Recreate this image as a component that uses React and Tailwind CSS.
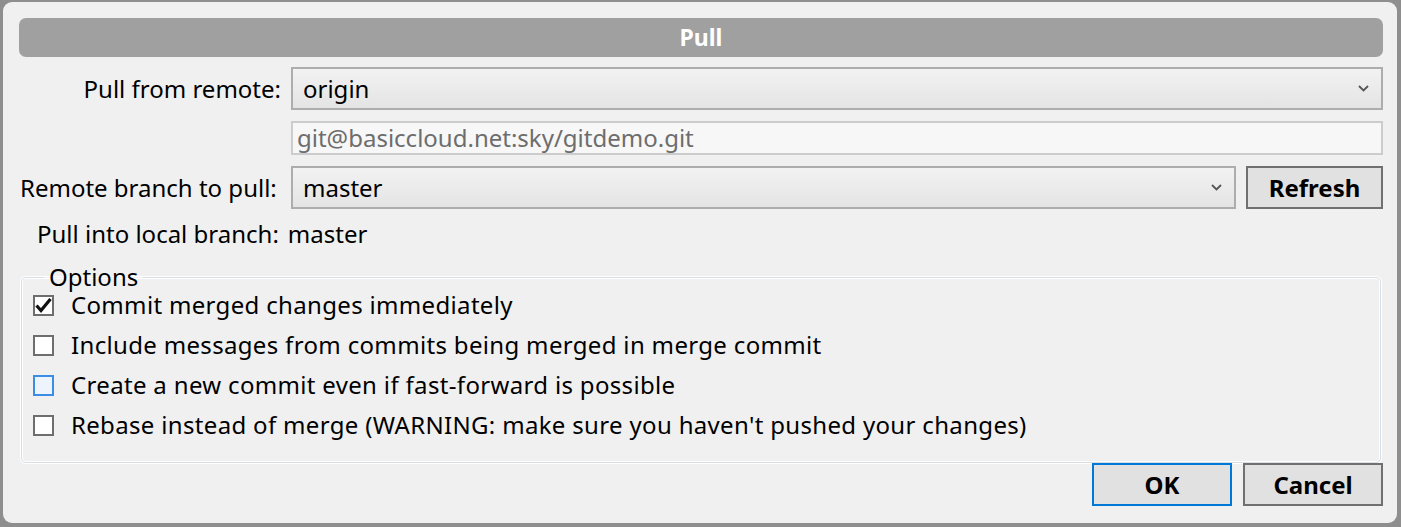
import React from 'react';

const font = { fontFamily: '"Noto Sans", "Open Sans", sans-serif' };

const Chevron = () => (
  <svg width="11" height="7" viewBox="0 0 11 7" className="shrink-0">
    <polyline points="1,1 5.5,5.5 10,1" fill="none" stroke="#555" strokeWidth="1.8" />
  </svg>
);

const Select = ({ value, className }) => (
  <div
    className={`flex items-center justify-between border-2 border-[#adadad] bg-gradient-to-b from-[#f2f2f2] to-[#e4e4e4] pl-[10px] pr-[12px] text-[#000] ${className}`}
  >
    <span>{value}</span>
    <Chevron />
  </div>
);

const Check = ({ checked, hover }) => (
  <div
    className={`flex h-[21px] w-[21px] shrink-0 items-center justify-center border-2 ${
      hover ? 'border-[#3b8de8] bg-[#eef4fc]' : 'border-[#6e6e6e] bg-white'
    }`}
  >
    {checked && (
      <svg width="17" height="15" viewBox="0 0 17 15">
        <polyline points="1.5,7.5 6,12.5 15.5,1" fill="none" stroke="#111" strokeWidth="3.2" />
      </svg>
    )}
  </div>
);

const options = [
  { label: 'Commit merged changes immediately', checked: true },
  { label: 'Include messages from commits being merged in merge commit' },
  { label: 'Create a new commit even if fast-forward is possible', hover: true },
  { label: "Rebase instead of merge (WARNING: make sure you haven't pushed your changes)" },
];

export default function App() {
  return (
    <div className="h-[527px] w-[1401px] bg-[#8e8e8e] pb-[4px] pl-[3px] pr-[4px] pt-[2px]" style={font}>
      <div className="flex h-full flex-col rounded-[9px] bg-[#f0f0f0] pl-[16px] pr-[14px] pt-[16px] text-[24px] leading-none text-black">
        {/* Title */}
        <div className="flex h-[39px] items-center justify-center rounded-[7px] bg-[#a0a0a0] text-[23px] font-bold text-white">
          Pull
        </div>

        {/* Pull from remote */}
        <div className="mt-[10px] flex items-center gap-[10px]">
          <div className="w-[262px] text-right">Pull from remote:</div>
          <Select value="origin" className="h-[43px] flex-1" />
        </div>

        {/* Remote URL */}
        <div className="mt-[11px] flex">
          <div className="ml-[272px] flex h-[34px] flex-1 items-center border-2 border-[#cccccc] bg-[#f7f7f7] pl-[4px] text-[#6d6d6d]">
            git@basiccloud.net:sky/gitdemo.git
          </div>
        </div>

        {/* Remote branch */}
        <div className="mt-[11px] flex items-center">
          <div className="w-[272px] pl-[1px]">Remote branch to pull:</div>
          <Select value="master" className="h-[43px] w-[945px]" />
          <button className="ml-[10px] flex h-[43px] flex-1 items-center justify-center border-2 border-[#707070] bg-[#e1e1e1] font-bold">
            Refresh
          </button>
        </div>

        {/* Local branch */}
        <div className="mt-[13px] flex items-center pl-[18px]">
          <span>Pull into local branch:</span>
          <span className="ml-[9px]">master</span>
        </div>

        {/* Options */}
        <fieldset className="mx-[2px] mt-[23px] rounded-[5px] border border-[#d5dfe5] pb-[17px] pl-[11px] shadow-[0_0_0_1px_#ffffff,inset_0_0_0_1px_#ffffff]">
          <legend className="ml-[11px] px-[5px] leading-[16px]">Options</legend>
          <div className="flex flex-col">
            {options.map((o) => (
              <div key={o.label} className="flex h-[40px] items-center gap-[17px]">
                <Check checked={o.checked} hover={o.hover} />
                <span className="tracking-[0.33px]">{o.label}</span>
              </div>
            ))}
          </div>
        </fieldset>

        {/* Buttons */}
        <div className="mt-[0px] flex justify-end gap-[11px]">
          <button className="flex h-[43px] w-[140px] items-center justify-center border-2 border-[#0078d7] bg-[#e1e1e1] font-bold">
            OK
          </button>
          <button className="flex h-[43px] w-[140px] items-center justify-center border-2 border-[#707070] bg-[#e1e1e1] font-bold">
            Cancel
          </button>
        </div>
      </div>
    </div>
  );
}
